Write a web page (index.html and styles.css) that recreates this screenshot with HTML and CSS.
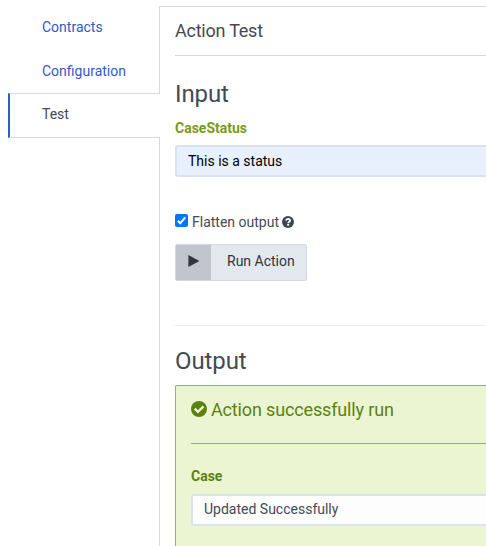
FILE: index.html
```html
<!DOCTYPE html>
<html lang="en">
<head>
<meta charset="utf-8">
<title>Action Test</title>
<link rel="stylesheet" href="styles.css">
</head>
<body>
<div class="layout">
  <nav class="tabs">
    <a class="tab">Contracts</a>
    <a class="tab">Configuration</a>
    <a class="tab active">Test</a>
    <div class="tab-fill"></div>
  </nav>
  <main class="content">
    <h3 class="title">Action Test</h3>
    <h2 class="section">Input</h2>
    <label class="label">CaseStatus</label>
    <div class="field filled">This is a status</div>
    <div class="option">
      <svg class="checkbox" viewBox="0 0 13 13"><rect width="13" height="13" rx="2" fill="#0075ff"/><path d="M2.8 6.8 5.2 9.2 10.3 3.4" fill="none" stroke="#fff" stroke-width="2"/></svg>
      <span class="option-text">Flatten output</span>
      <svg class="help" viewBox="0 0 12 12"><circle cx="6" cy="6" r="6" fill="#3e464e"/><path d="M4 4.600C4.200 3.300 5 2.800 6 2.800c1.200 0 2.100.7 2.100 1.700C8.100 5.700 6.200 5.800 6.200 7.200" fill="none" stroke="#fff" stroke-width="1.700"/><rect x="5.200" y="8" width="1.900" height="1.700" fill="#fff"/></svg>
    </div>
    <div class="button">
      <span class="button-icon"><svg width="12" height="12" viewBox="0 0 12 12"><path d="M.4 0 11.400 6 .4 12z" fill="#30363c"/></svg></span>
      <span class="button-text">Run Action</span>
    </div>
    <hr class="divider">
    <h2 class="section output">Output</h2>
    <div class="result">
      <h3 class="result-title"><svg width="16" height="16" viewBox="0 0 15 15"><circle cx="7.500" cy="7.500" r="7.500" fill="#5b8210"/><path d="M3.500 7.200 6.500 10.200 11.700 5" fill="none" stroke="#ebf5d1" stroke-width="2.200"/></svg><span>Action successfully run</span></h3>
      <label class="label case">Case</label>
      <div class="field readonly">Updated Successfully</div>
    </div>
  </main>
</div>
</body>
</html>
```
FILE: styles.css
```css
* { box-sizing: border-box; }
body {
  margin: 0;
  background: #fff;
  color: #434a54;
  font: 14px/20px Roboto, "Liberation Sans", sans-serif;
  overflow: hidden;
}
h2, h3 { margin: 0; font-weight: 400; }
.layout { display: flex; height: 546px; padding: 6px 0 0 8px; }
.tabs { display: flex; flex-direction: column; width: 152px; flex: none; }
.tab {
  height: 44px;
  padding: 12px 0 0 34px;
  border-right: 1px solid #d9d9d9;
  color: #3159c9;
}
.tab:first-child { height: 43px; padding-top: 11px; }
.tab.active {
  height: 45px;
  padding-left: 32px;
  color: #434a54;
  border: solid #d9d9d9;
  border-width: 1px 0;
  border-left: 2px solid #2b5fc7;
  padding-top: 10px;
}
.tab-fill { flex: 1; border-right: 1px solid #d9d9d9; }
.content { flex: 1; min-width: 0; padding-left: 15px; border-top: 1px solid #d9d9d9; }
.title {
  height: 49px;
  padding-top: 12px;
  border-bottom: 1px solid #d9d9d9;
  font-size: 18px;
  line-height: 24px;
  letter-spacing: -0.23px;
}
.section { margin-top: 23px; font-size: 24px; line-height: 30px; letter-spacing: -0.1px; }
.label { display: block; margin-top: 9px; font-weight: 700; color: #779b1c; }
.field {
  height: 32px;
  margin-top: 7px;
  padding: 4px 11px;
  border: 2px solid #dce2ec;
  border-right: 0;
  border-radius: 3px 0 0 3px;
  background: #fdfdfd;
}
.field.filled { background: #e8f0fe; color: #000; }
.field.readonly { margin-top: 8px; padding-top: 3px; }
.option { display: flex; align-items: center; height: 20px; margin-top: 35px; }
.checkbox { width: 13px; height: 13px; margin-top: -3px; }
.option-text { margin: 0 3px 0 4px; }
.help { width: 12px; height: 12px; }
.button {
  display: flex;
  width: 132px;
  height: 37px;
  margin-top: 12px;
  border: 1px solid #d3d9df;
  border-radius: 2px;
  background: #e3e8ef;
  color: #30363c;
}
.button-icon {
  display: flex;
  align-items: center;
  justify-content: center;
  width: 35px;
  padding-bottom: 3px;
  background: #c1c5cd;
}
.button-text { padding: 6px 0 0 16px; }
.divider { height: 1px; margin: 44px 0 0; border: 0; background: #eee; }
.section.output { margin-top: 20px; }
.result {
  height: 180px;
  margin-top: 9px;
  padding-left: 15px;
  border: solid #97c318;
  border-width: 1px 0 0 1px;
  border-radius: 2px 0 0;
  background: #ebf5d1;
}
.result-title {
  display: flex;
  gap: 4px;
  height: 58px;
  padding-top: 12px;
  border-bottom: 1px solid #97c318;
  color: #5b8210;
  font-size: 18px;
  line-height: 24px;
  letter-spacing: -0.15px;
}
.result-title svg { margin-top: 3px; }
.label.case { margin-top: 22px; color: #5b8210; }
```
